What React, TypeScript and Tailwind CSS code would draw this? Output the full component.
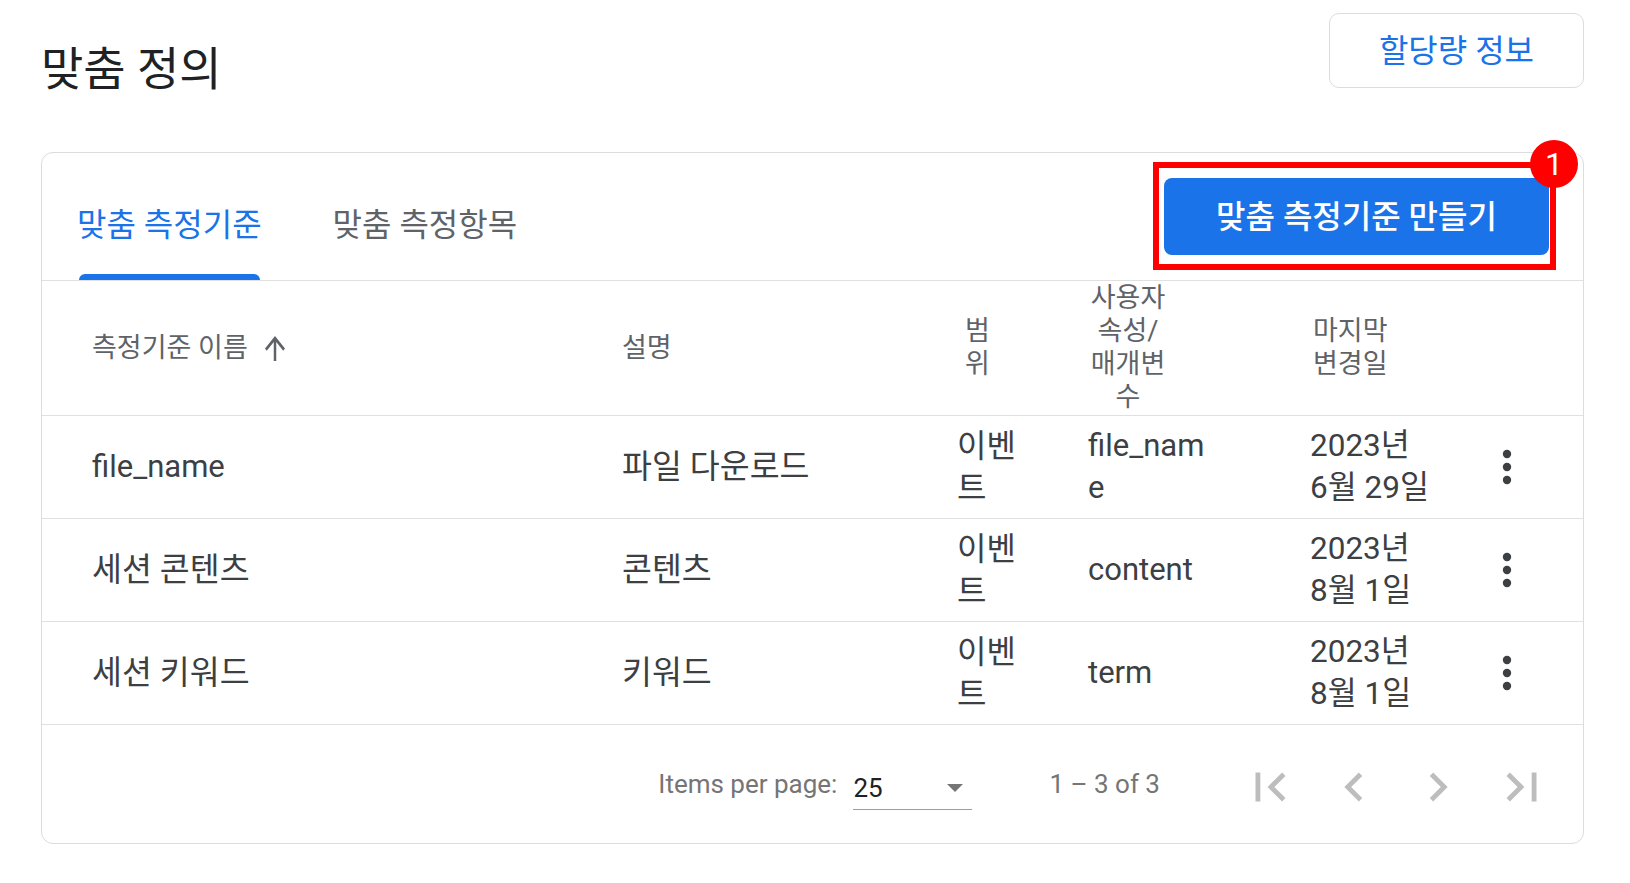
import React from "react";

const rows = [
  { name: "file_name", nameCls: "text-[31px]", desc: "파일 다운로드", scope: "이벤트", param: "file_name", date: "2023년 6월 29일" },
  { name: "세션 콘텐츠", nameCls: "text-[32.5px]", desc: "콘텐츠", scope: "이벤트", param: "content", date: "2023년 8월 1일" },
  { name: "세션 키워드", nameCls: "text-[32.5px]", desc: "키워드", scope: "이벤트", param: "term", date: "2023년 8월 1일" },
];

function PageIcon({ d }: { d: string }) {
  return (
    <svg width="58" height="58" viewBox="0 0 24 24" className="fill-[#bdbdbd]">
      <path d={d} />
    </svg>
  );
}

function MoreVert() {
  return (
    <svg width="58" height="58" viewBox="0 0 58 58" className="fill-[#3c4043]">
      <circle cx="29" cy="16" r="4.2" />
      <circle cx="29" cy="29" r="4.2" />
      <circle cx="29" cy="42" r="4.2" />
    </svg>
  );
}

export default function App() {
  return (
    <div className="relative min-h-screen bg-white text-[#202124] font-[family-name:Roboto,'Noto_Sans_CJK_KR',sans-serif]">
      <div className="pl-[41px] pr-[46px]">
        <div className="flex items-start justify-between pt-[13px]">
          <h1 className="mt-[37px] text-[46px] leading-[38px] font-normal text-[#202124]">맞춤 정의</h1>
          <button className="h-[75px] w-[255px] rounded-[10px] border border-[#dadce0] bg-white text-[32px] text-[#1a73e8]">
            할당량 정보
          </button>
        </div>

        <div className="mt-[64px] rounded-[12px] border border-[#dadce0] bg-white">
          {/* tabs */}
          <div className="flex h-[128px] justify-between border-b border-[#e0e0e0]">
            <div className="flex gap-[71px] pl-[35px]">
              <div className="flex flex-col justify-end">
                <span className="text-[32px] leading-[40px] text-[#1a73e8]">맞춤 측정기준</span>
                <div className="mx-[2px] mt-[29px] h-[6px] rounded-t-[6px] bg-[#1a73e8]" />
              </div>
              <div className="flex flex-col justify-end">
                <span className="text-[32px] leading-[40px] text-[#5f6368]">맞춤 측정항목</span>
                <div className="mt-[29px] h-[6px]" />
              </div>
            </div>
            <button className="mr-[34px] mt-[25px] h-[77px] w-[385px] rounded-[8px] bg-[#1a73e8] text-[32px] font-medium text-white">
              맞춤 측정기준 만들기
            </button>
          </div>

          {/* header */}
          <div className="flex h-[135px] items-center border-b border-[#e0e0e0] pl-[50px] text-[27px] leading-[33px] text-[#5f6368]">
            <div className="flex w-[530px] items-center">
              <span>측정기준 이름</span>
              <svg width="20" height="25" viewBox="4 4 16 16" preserveAspectRatio="none" className="ml-[17px] fill-[#5f6368]">
                <path d="M4 12l1.41 1.41L11 7.83V20h2V7.83l5.58 5.59L20 12l-8-8-8 8z" />
              </svg>
            </div>
            <div className="w-[335px]">설명</div>
            <div className="w-[131px] pl-[8px]">
              범<br />위
            </div>
            <div className="w-[222px]">
              <div className="w-[80px] whitespace-nowrap text-center">
                사용자<br />속성/<br />매개변<br />수
              </div>
            </div>
            <div className="w-[168px] pl-[3px]">
              마지막<br />변경일
            </div>
            <div className="w-[58px]" />
          </div>

          {/* rows */}
          {rows.map((r) => (
            <div
              key={r.name}
              className="flex h-[103px] items-center border-b border-[#e0e0e0] pl-[50px] text-[31px] leading-[42px] text-[#3c4043]"
            >
              <div className={`w-[530px] ${r.nameCls}`}>{r.name}</div>
              <div className="w-[335px] text-[32.5px]">{r.desc}</div>
              <div className="w-[131px] text-[32px]">
                <div className="w-[64px] break-all">{r.scope}</div>
              </div>
              <div className="w-[222px]">
                <div className="w-[120px] break-all">{r.param}</div>
              </div>
              <div className="w-[168px] text-[31.5px]">
                <div className="w-[130px] break-keep">{r.date}</div>
              </div>
              <div className="flex w-[58px] justify-center">
                <MoreVert />
              </div>
            </div>
          ))}

          {/* paginator */}
          <div className="flex h-[118px] items-center justify-end pr-[32px] text-[26px] leading-[30px] text-[#757575]">
            <span>Items per page:</span>
            <div className="ml-[16px] mt-[15px] flex w-[119px] items-center justify-between border-b border-[#9e9e9e] pb-[6px] pr-[9px]">
              <span className="text-[#202124]">25</span>
              <svg width="16" height="8" viewBox="7 10 10 5" className="fill-[#757575]">
                <path d="M7 10l5 5 5-5z" />
              </svg>
            </div>
            <span className="ml-[77px]">1 – 3 of 3</span>
            <div className="ml-[81px] mt-[6px] flex gap-[26px]">
              <PageIcon d="M18.41 16.59L13.82 12l4.59-4.59L17 6l-6 6 6 6zM6 6h2v12H6z" />
              <PageIcon d="M15.41 7.41L14 6l-6 6 6 6 1.41-1.41L10.83 12z" />
              <PageIcon d="M10 6L8.59 7.41 13.17 12l-4.58 4.59L10 18l6-6z" />
              <PageIcon d="M5.59 7.41L10.18 12l-4.59 4.59L7 18l6-6-6-6zM16 6h2v12h-2z" />
            </div>
          </div>
        </div>
      </div>

      {/* annotation overlay */}
      <div className="absolute left-[1153px] top-[162px] h-[108px] w-[403px] border-[6px] border-[#ff0000]" />
      <div className="absolute left-[1530px] top-[140px] flex h-[48px] w-[48px] items-center justify-center rounded-full bg-[#ff0000] text-[32px] leading-none text-white">
        1
      </div>
    </div>
  );
}
